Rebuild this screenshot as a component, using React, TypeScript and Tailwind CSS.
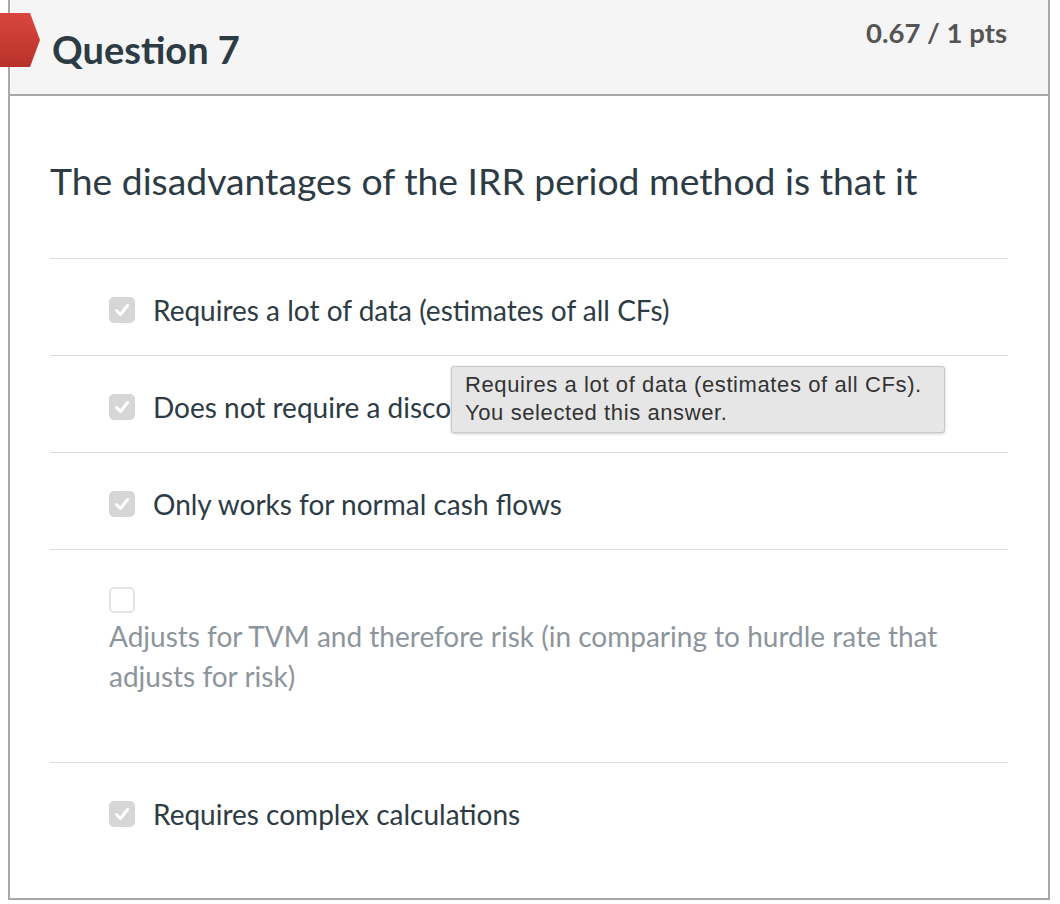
import React from "react";

type Answer = { text: string; checked: boolean; muted?: boolean };

const answers: Answer[] = [
  { text: "Requires a lot of data (estimates of all CFs)", checked: true },
  { text: "Does not require a discount rate", checked: true },
  { text: "Only works for normal cash flows", checked: true },
  {
    text: "Adjusts for TVM and therefore risk (in comparing to hurdle rate that adjusts for risk)",
    checked: false,
    muted: true,
  },
  { text: "Requires complex calculations", checked: true },
];

function Box({ checked }: { checked: boolean }) {
  if (!checked) {
    return <span className="block h-[26px] w-[26px] shrink-0 rounded-[5px] border-2 border-[#e4e4e4] bg-white" />;
  }
  return (
    <span className="flex h-[26px] w-[26px] shrink-0 items-center justify-center rounded-[5px] bg-[#d6d6d6]">
      <svg width="18" height="18" viewBox="0 0 18 18" fill="none">
        <path d="M3.5 9.5 L7.5 13.5 L14.5 4.5" stroke="#fff" strokeWidth="3" strokeLinecap="round" strokeLinejoin="round" />
      </svg>
    </span>
  );
}

function Row({ a }: { a: Answer }) {
  if (a.muted) {
    return (
      <div className="h-[213px] border-t border-[#dcdcdc] pl-[59px] pr-[60px] pt-[37px]">
        <Box checked={false} />
        <p className="mt-[3px] text-[28px] leading-[40px] text-[#8d959c]">{a.text}</p>
      </div>
    );
  }
  return (
    <div className="flex h-[97px] items-center gap-[18px] border-t border-[#dcdcdc] pl-[59px] pt-[5px]">
      <Box checked={a.checked} />
      <span className="text-[28px] leading-[36px] text-[#2d3b45]">{a.text}</span>
    </div>
  );
}

export default function App() {
  return (
    <div className="relative h-[904px] w-[1060px] overflow-hidden bg-white font-['Lato','Noto_Sans',sans-serif]">
      <div className="ml-[8px] h-[900px] w-[1042px] border-x-2 border-b-2 border-[#a9a9a9]">
        <div className="flex h-[96px] items-start justify-between border-b-2 border-[#a9a9a9] bg-[#f5f5f5] pl-[42px] pr-[41px]">
          <h2 className="mt-[27px] text-[38px] font-bold leading-[44px] text-[#2d3b45]">Question 7</h2>
          <span className="mt-[17px] text-[27.5px] font-bold leading-[32px] text-[#555]">0.67 / 1 pts</span>
        </div>
        <div className="px-[40px]">
          <p className="mt-[62px] text-[37.3px] leading-[46px] text-[#2d3b45]">
            The disadvantages of the IRR period method is that it
          </p>
          <div className="mt-[54px]">
            {answers.map((a) => (
              <Row key={a.text} a={a} />
            ))}
          </div>
        </div>
      </div>

      <svg className="absolute left-0 top-[13px]" width="42" height="54" viewBox="0 0 42 54">
        <defs>
          <linearGradient id="flag" x1="0" y1="0" x2="0" y2="1">
            <stop offset="0" stopColor="#d9473f" />
            <stop offset="1" stopColor="#b8322b" />
          </linearGradient>
        </defs>
        <path d="M0 0 H30 L40 27 L30 54 H0 Z" fill="url(#flag)" />
      </svg>

      <div className="absolute left-[451px] top-[366px] h-[67px] w-[494px] rounded-[3px] border border-[#c9c9c9] bg-[#e6e6e6] px-[13px] pt-[4px] font-['Liberation_Sans',Arial,sans-serif] text-[22px] leading-[28px] tracking-[0.6px] text-[#333] shadow-[0_1px_3px_rgba(0,0,0,0.2)]">
        <div>Requires a lot of data (estimates of all CFs).</div>
        <div>You selected this answer.</div>
      </div>
    </div>
  );
}
